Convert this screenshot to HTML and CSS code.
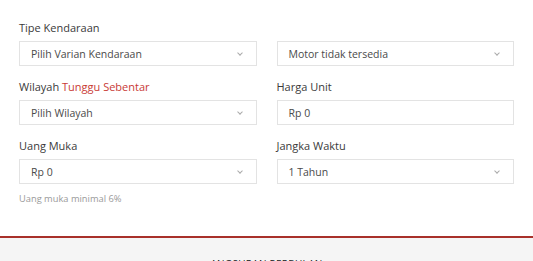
FILE: index.html
```html
<!DOCTYPE html>
<html>
<head lang="id">
    <meta charset="UTF-8">
    <title>Simulasi Kredit</title>
    <link rel="stylesheet" href="styles.css">
</head>
<body>

<!--form simulasi-->
<div class="simulasi">
    <div class="field">
        <label>Tipe Kendaraan</label>
        <div class="box select"><span>Pilih Varian Kendaraan</span><i class="chev"></i></div>
    </div>
    <div class="field">
        <label>&nbsp;</label>
        <div class="box select"><span>Motor tidak tersedia</span><i class="chev"></i></div>
    </div>
    <div class="field">
        <label>Wilayah <em class="loading">Tunggu Sebentar</em></label>
        <div class="box select"><span>Pilih Wilayah</span><i class="chev"></i></div>
    </div>
    <div class="field">
        <label>Harga Unit</label>
        <div class="box"><span>Rp 0</span></div>
    </div>
    <div class="field">
        <label>Uang Muka</label>
        <div class="box select"><span>Rp 0</span><i class="chev"></i></div>
        <p class="hint">Uang muka minimal 6%</p>
    </div>
    <div class="field">
        <label>Jangka Waktu</label>
        <div class="box select"><span>1 Tahun</span><i class="chev"></i></div>
    </div>
</div>

<!--hasil-->
<div class="hasil">
    <h5>ANGSURAN PERBULAN</h5>
</div>

</body>
</html>
```

FILE: styles.css
```css
body, p, h5 {
    margin: 0;
    padding: 0;
}

body {
    font-family: "Open Sans", "Liberation Sans", sans-serif;
    color: #333;
    background: #fff;
    overflow: hidden;
}

.simulasi {
    display: grid;
    grid-template-columns: 1fr 1fr;
    column-gap: 20px;
    padding: 20px 19px 31px 19px;
}

.field {
    margin-bottom: 13px;
}

.field label {
    display: block;
    height: 16px;
    line-height: 16px;
    margin-bottom: 5px;
    font-size: 11px;
    color: #3a3a3a;
}

.loading {
    font-style: normal;
    color: #c93a36;
}

.box {
    display: flex;
    align-items: center;
    justify-content: space-between;
    height: 25px;
    padding: 0 14px 0 11px;
    border: 1px solid #e3e3e3;
    box-sizing: border-box;
    font-size: 10.5px;
    color: #4a4a4a;
}

.chev {
    width: 3px;
    height: 3px;
    border-right: 1px solid #aaa;
    border-bottom: 1px solid #aaa;
    transform: rotate(45deg);
    margin-top: -2px;
}

.hint {
    margin-top: 9px;
    height: 12px;
    line-height: 12px;
    font-size: 9.3px;
    color: #9a9a9a;
}

.field:nth-child(5),
.field:nth-child(6) {
    margin-bottom: 0;
}

/*angsuran*/
.hasil {
    height: 40px;
    border-top: 2px solid #a8302a;
    background: #f5f5f5;
    text-align: center;
}

.hasil h5 {
    padding-top: 19px;
    font-size: 10px;
    font-weight: 400;
    letter-spacing: 0.3px;
    color: #222;
}
```
